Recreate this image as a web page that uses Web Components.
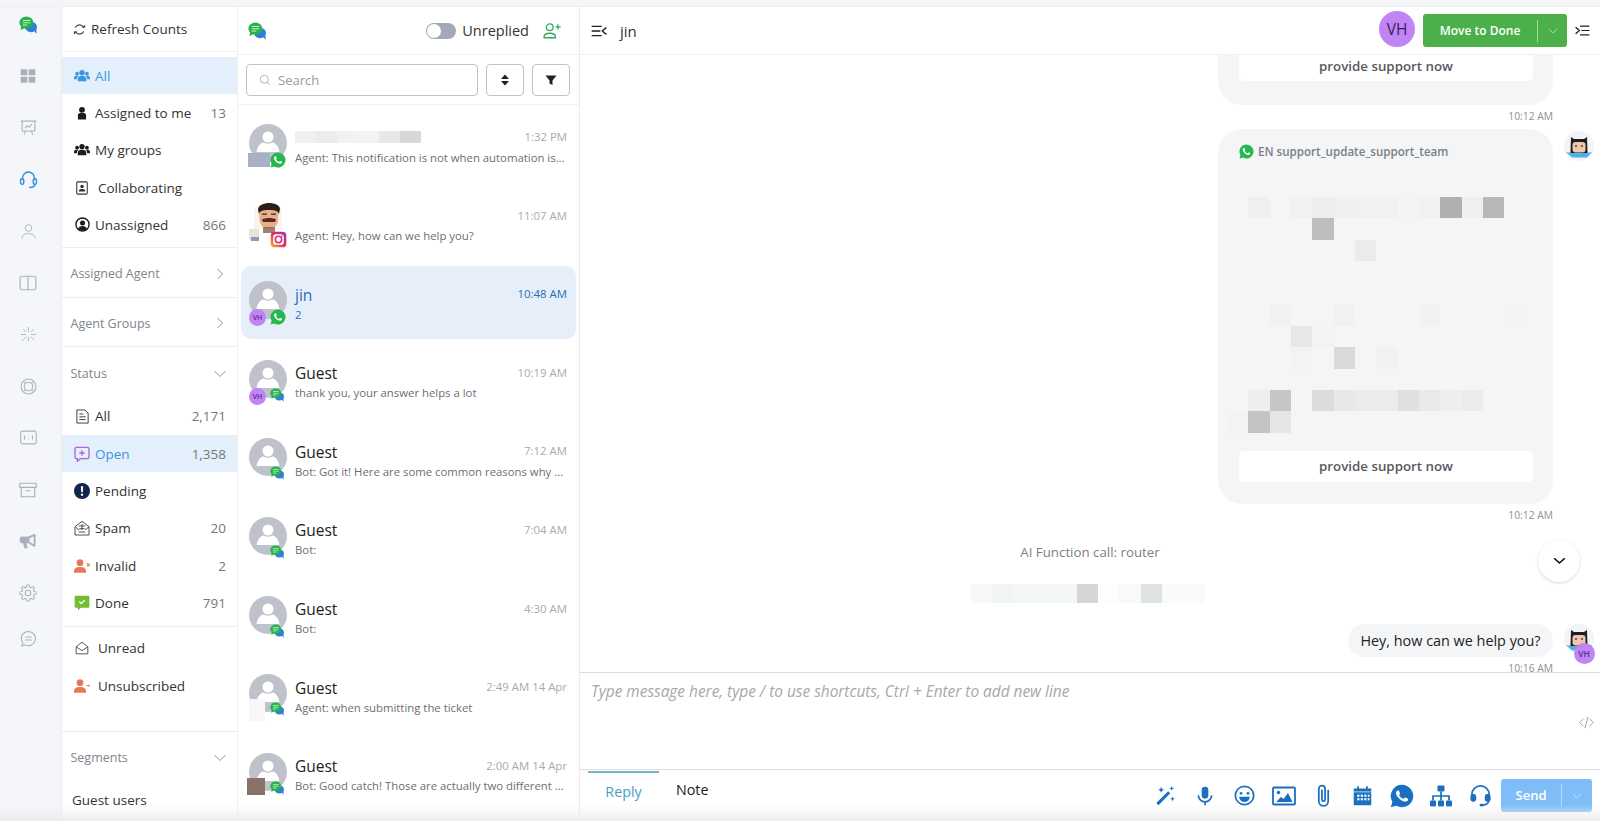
<!DOCTYPE html>
<html lang="en">
<head>
<meta charset="utf-8">
<title>Inbox</title>
<style>
  html, body { margin: 0; height: 100%; overflow: hidden; background: #fff; font-family: "Open Sans", "Liberation Sans", sans-serif; }
</style>
</head>
<body>
<inbox-app></inbox-app>
<script>
(() => {
  // Small helper: every element gets an open shadow root, its css and its markup
  const define = (name, css, html) => customElements.define(name, class extends HTMLElement {
    connectedCallback() {
      if (this.shadowRoot) return;
      const root = this.attachShadow({ mode: 'open' });
      root.innerHTML = '<style>' + css + '</style>' + html(this);
    }
  });

  const PHONE = 'M17.47 14.38c-.3-.15-1.76-.87-2.03-.97-.27-.1-.47-.15-.67.15-.2.3-.77.97-.94 1.16-.17.2-.35.22-.64.08-.3-.15-1.26-.46-2.39-1.48-.88-.79-1.48-1.76-1.65-2.06-.17-.3-.02-.46.13-.61.13-.13.3-.35.45-.52.15-.17.2-.3.3-.5.1-.2.05-.37-.03-.52-.07-.15-.67-1.61-.92-2.21-.24-.58-.49-.5-.67-.51h-.57c-.2 0-.52.07-.79.37-.27.3-1.04 1.02-1.04 2.48s1.07 2.88 1.21 3.07c.15.2 2.1 3.2 5.08 4.49.71.31 1.26.49 1.69.63.71.23 1.36.2 1.87.12.57-.09 1.76-.72 2-1.41.25-.7.25-1.29.17-1.41-.07-.13-.27-.2-.57-.35z';
  const GEAR = 'M19.4 15a1.65 1.65 0 0 0 .33 1.82l.06.06a2 2 0 0 1 0 2.83 2 2 0 0 1-2.83 0l-.06-.06a1.65 1.65 0 0 0-1.82-.33 1.65 1.65 0 0 0-1 1.51V21a2 2 0 0 1-2 2 2 2 0 0 1-2-2v-.09A1.65 1.65 0 0 0 9 19.4a1.65 1.65 0 0 0-1.82.33l-.06.06a2 2 0 0 1-2.83 0 2 2 0 0 1 0-2.83l.06-.06a1.65 1.65 0 0 0 .33-1.82 1.65 1.65 0 0 0-1.51-1H3a2 2 0 0 1-2-2 2 2 0 0 1 2-2h.09A1.65 1.65 0 0 0 4.6 9a1.65 1.65 0 0 0-.33-1.82l-.06-.06a2 2 0 0 1 0-2.83 2 2 0 0 1 2.83 0l.06.06a1.65 1.65 0 0 0 1.82.33H9a1.65 1.65 0 0 0 1-1.51V3a2 2 0 0 1 2-2 2 2 0 0 1 2 2v.09a1.65 1.65 0 0 0 1 1.51 1.65 1.65 0 0 0 1.82-.33l.06-.06a2 2 0 0 1 2.83 0 2 2 0 0 1 0 2.83l-.06.06a1.65 1.65 0 0 0-.33 1.82V9a1.65 1.65 0 0 0 1.51 1H21a2 2 0 0 1 2 2 2 2 0 0 1-2 2h-.09a1.65 1.65 0 0 0-1.51 1z';
  const three = c => `<g fill="${c}"><circle cx="12" cy="7" r="4"/><circle cx="4.6" cy="8.6" r="2.8"/><circle cx="19.4" cy="8.6" r="2.8"/><path d="M5.6 20v-3.5c0-3 2.4-4.7 6.4-4.7s6.4 1.700 6.400 4.700V20z"/><path d="M0 17v-2.500C0 12.600 2 11.800 4.600 11.800c.7 0 1.400.1 2 .3-1.500 1-2.300 2.500-2.300 4.400V17zM24 17v-2.500c0-1.900-2-2.700-4.600-2.700-.7 0-1.400.1-2 .3 1.500 1 2.300 2.500 2.300 4.400V17z"/></g>`;
  const personX = c => `<g fill="${c}"><circle cx="9" cy="7" r="5"/><path d="M0 22v-2.500C0 15.800 3.800 13.500 9 13.500s9 2.300 9 6V22z"/></g>`;

  const ICONS = {
    logo: `<ellipse cx="16" cy="14.500" rx="8" ry="7" fill="#2f80d8"/><path fill="#2f80d8" d="M19 19l4.500 4.500-.5-7z"/><ellipse cx="9.800" cy="8.800" rx="9.300" ry="8" fill="#27b34b"/><path fill="#27b34b" d="M3 13l-1 5.500 6-2.500z"/><path stroke="#c8f2d3" stroke-width="1.300" d="M5 6h10M5 9h10M5 12h6"/>`,
    grid: `<g fill="#a9b1bf"><rect x="1" y="2" width="10" height="9" rx="1"/><rect x="13" y="2" width="10" height="9" rx="1"/><rect x="1" y="13" width="10" height="9" rx="1"/><rect x="13" y="13" width="10" height="9" rx="1"/></g>`,
    board: `<g fill="none" stroke="#a9b1bf" stroke-width="1.500"><path d="M1 3h22M3 3v14h18V3M8 17l-2 5M16 17l2 5"/><path d="M7 13l3.500-3.500 2.500 2L17 7"/></g>`,
    headset: `<g fill="none" stroke="#2f93dc" stroke-width="1.800" stroke-linecap="round"><path d="M4.500 12V10a7.500 7.500 0 0 1 15 0v2"/><rect x="2" y="11" width="4" height="7" rx="2"/><rect x="18" y="11" width="4" height="7" rx="2"/><path d="M20 18c0 3-3 4-6.500 4"/></g>`,
    person: `<g fill="none" stroke="#a9b1bf" stroke-width="1.300"><circle cx="12" cy="7" r="4.700"/><path d="M3 22v-1.500c0-3.500 3.500-5.500 9-5.500s9 2 9 5.500V22"/></g>`,
    columns: `<g fill="none" stroke="#a9b1bf" stroke-width="1.600"><rect x="1.500" y="3" width="21" height="18" rx="2"/><path d="M12 3v18"/></g>`,
    spark: `<g stroke="#b4bac6" stroke-width="1.400" stroke-linecap="round"><path d="M12 2v6M12 16v5M2 12h6M16 12h6M5 5l3.500 3.500M15.500 15.500L19 19M19 5l-3.500 3.500M8.500 15.500L3 21"/></g>`,
    lifebuoy: `<g fill="none" stroke="#a9b1bf" stroke-width="1.500"><circle cx="12" cy="12" r="10.500"/><circle cx="12" cy="12" r="6"/><path d="M5 5l3 3M19 5l-3 3M5 19l3-3M19 19l-3-3"/></g>`,
    ratio: `<g fill="none" stroke="#a9b1bf" stroke-width="1.500"><rect x="1" y="3" width="22" height="18" rx="2.500"/><path d="M6.500 9v6M17.500 9v6M12 9.500v.6M12 13.900v.6"/></g>`,
    archive: `<g fill="none" stroke="#a9b1bf" stroke-width="1.600"><rect x="1" y="3" width="22" height="5.500" rx=".8"/><path d="M3 8.500V21h18V8.500M9 13h6"/></g>`,
    megaphone: `<path fill="#a9b1bf" d="M22 3v16l-2 .5-7.500-4.500H10l1.500 6.500H7L5.500 15H4a3 3 0 0 1-3-3V9a3 3 0 0 1 3-3h8.500L20 2.500z"/><path fill="#f4f6f9" d="M19.500 5.500v11l-5.500-3.500V8.500z"/>`,
    gear: `<g fill="none" stroke="#a9b1bf" stroke-width="1.400"><circle cx="12" cy="12" r="3.600"/><path d="${GEAR}"/></g>`,
    chatlines: `<g fill="none" stroke="#a9b1bf" stroke-width="1.500" stroke-linecap="round"><path d="M12 2a10 10 0 1 1-4.500 19L2.500 22.500 4 18A10 10 0 0 1 12 2z"/><path d="M8 10h8M8 14h8"/></g>`,
    refresh: `<g fill="none" stroke="#444" stroke-width="2" stroke-linecap="round"><path d="M19.500 8A8.500 8.500 0 0 0 4.500 8"/><path d="M4.500 16a8.500 8.500 0 0 0 15 0"/></g><path fill="#444" d="M16 8.500h6.500V3zM8 15.500H1.500V21z"/>`,
    usersBlue: three('#3d95e0'),
    usersBlack: three('#1c1c1c'),
    userSolid: `<g fill="#1c1c1c"><circle cx="12" cy="6.500" r="5"/><path d="M5 23v-7c0-2.500 2-4 4-4h6c2 0 4 1.500 4 4v7z"/></g>`,
    card: `<g fill="none" stroke="#333" stroke-width="1.800"><rect x="3" y="1.500" width="18" height="21" rx="2"/></g><g fill="#333"><circle cx="12" cy="9.500" r="3"/><path d="M6.500 18v-1.500c0-1.700 2.500-2.700 5.500-2.700s5.500 1 5.500 2.700V18z"/></g>`,
    userCircle: `<circle cx="12" cy="12" r="10.500" fill="none" stroke="#1c1c1c" stroke-width="2.200"/><g fill="#1c1c1c"><circle cx="12" cy="9.500" r="4"/><path d="M5 19c1-3 3.500-4.500 7-4.500s6 1.500 7 4.500l-3.500 3h-7z"/></g>`,
    doc: `<g fill="none" stroke="#444" stroke-width="1.600"><path d="M3 1.500h13l5 5V22.500H3z"/><path d="M7 8h6M7 12.500h10M7 17h10"/></g>`,
    msgPlus: `<g fill="none" stroke="#b163dc" stroke-width="2"><path d="M4 2h16a2.500 2.500 0 0 1 2.500 2.500v12A2.500 2.500 0 0 1 20 19H9.500L5 23v-4H4a2.500 2.500 0 0 1-2.500-2.500v-12A2.500 2.500 0 0 1 4 2z"/><path d="M12 6.500v8M8 10.500h8"/></g>`,
    alert: `<circle cx="12" cy="12" r="12" fill="#12264a"/><path fill="#fff" d="M10.300 5h3.400l-.5 9h-2.400z"/><circle cx="12" cy="17.500" r="1.800" fill="#fff"/>`,
    spam: `<g fill="none" stroke="#444" stroke-width="1.400"><path d="M1.500 10L12 2l10.500 8v12.500h-21z"/><path d="M1.500 10l6 5M22.500 10l-6 5M7 9h10M12 6v9M8 13l8 0M7 18h10"/></g>`,
    userX: personX('#e4765a') + `<path stroke="#e4765a" stroke-width="1.600" d="M19.500 8l4 4M23.500 8l-4 4"/>`,
    userMinus: personX('#e4765a') + `<path stroke="#e4765a" stroke-width="1.800" d="M19 11.500h5"/>`,
    done: `<path fill="#74bd2e" d="M2.500 1h19A1.500 1.500 0 0 1 23 2.500v15a1.500 1.500 0 0 1-1.500 1.500H10l-4 4v-4H2.500A1.500 1.500 0 0 1 1 17.500v-15A1.500 1.500 0 0 1 2.500 1z"/><path fill="none" stroke="#fff" stroke-width="2" d="M8 10l3 3 5-5"/>`,
    envOpen: `<g fill="none" stroke="#444" stroke-width="1.500"><path d="M2 10l10-8 10 8v12H2z"/><path d="M2 10l10 6.500L22 10"/></g>`,
    chevRight: `<path fill="none" stroke="#777" stroke-width="1.600" d="M7 2l10 10L7 22"/>`,
    chevDown: `<path fill="none" stroke="#777" stroke-width="1.600" d="M1 6l11 11L23 6"/>`,
    chevWhite: `<path fill="none" stroke="#fff" stroke-width="1.500" d="M2 7l10 10L22 7" opacity=".85"/>`,
    chevBold: `<path fill="none" stroke="#111" stroke-width="3.400" stroke-linecap="round" d="M3 5l9 13 9-13"/>`,
    addUser: `<g fill="none" stroke="#38a85a" stroke-width="1.800"><circle cx="9" cy="7" r="4.500"/><path d="M1.500 21v-1.500c0-3 3-4.500 7.500-4.500s7.500 1.500 7.500 4.500V21z"/></g><path stroke="#38a85a" stroke-width="1.800" d="M20 3v7M16.500 6.500h7"/>`,
    search: `<g fill="none" stroke="#999" stroke-width="1.500"><circle cx="10.500" cy="10.500" r="8"/><path d="M16.500 16.500L22 22"/></g>`,
    sort: `<path fill="#222" d="M12 1l8 9H4zM12 23l-8-9h16z"/>`,
    filter: `<path fill="#222" d="M1 3h22l-8 10v9l-6-3v-6z"/>`,
    menuLeft: `<g fill="none" stroke="#222" stroke-width="2.200"><path d="M1 4h15M1 12h13M1 20h15M23 6l-6 6 6 6"/></g>`,
    menuRight: `<g fill="none" stroke="#222" stroke-width="2.200"><path d="M8 4h15M10 12h13M8 20h15M1 6l6 6-6 6"/></g>`,
    code: `<g fill="none" stroke="#999" stroke-width="1.400"><path d="M7 6l-6 6 6 6M17 6l6 6-6 6M14.500 3l-5 18"/></g>`,
    whatsapp: `<path fill="#25b84c" d="M12 .8A11.200 11.200 0 0 0 2.400 17.800L.8 23.200l5.600-1.500A11.200 11.200 0 1 0 12 .8z"/><path fill="#fff" d="${PHONE}"/>`,
    whatsappBlue: `<path fill="#1a6fc0" d="M12 .8A11.200 11.200 0 0 0 2.400 17.800L.8 23.200l5.600-1.500A11.200 11.200 0 1 0 12 .8z"/><path fill="#fff" d="${PHONE}"/>`,
    instagram: `<defs><linearGradient id="ig" x1="0" y1="1" x2="1" y2="0"><stop offset="0" stop-color="#fdb32b"/><stop offset=".5" stop-color="#e9285c"/><stop offset="1" stop-color="#8a3ac6"/></linearGradient></defs><rect x="1" y="1" width="22" height="22" rx="5.500" fill="url(#ig)"/><rect x="4.500" y="4.500" width="15" height="15" rx="4" fill="#fff"/><circle cx="12" cy="12" r="4.500" fill="none" stroke="#d9316f" stroke-width="2.200"/><circle cx="16.800" cy="7.200" r="1.100" fill="#d9316f"/>`,
    wand: `<g fill="#1a6fc0"><path d="M1.500 20.500L15 7l2.500 2.500L4 23z"/><path d="M7 2l1 2.500L10.500 5.500 8 6.500 7 9 6 6.500 3.500 5.500 6 4.500zM19 1l.8 2 2 .8-2 .8-.8 2-.8-2-2-.8 2-.8zM20 13l.8 2 2 .8-2 .8-.8 2-.8-2-2-.8 2-.8z"/></g>`,
    mic: `<rect x="8" y="1" width="8" height="14" rx="4" fill="#1a6fc0"/><path fill="none" stroke="#1a6fc0" stroke-width="2" d="M4 11a8 8 0 0 0 16 0M12 19v4"/>`,
    smile: `<circle cx="12" cy="12" r="10.500" fill="none" stroke="#1a6fc0" stroke-width="2"/><circle cx="8" cy="9.500" r="1.600" fill="#1a6fc0"/><circle cx="16" cy="9.500" r="1.600" fill="#1a6fc0"/><path fill="#1a6fc0" d="M6 13.500h12a6 6 0 0 1-12 0z"/>`,
    image: `<rect x="1" y="3.500" width="22" height="17" rx="1" fill="none" stroke="#1a6fc0" stroke-width="1.800"/><circle cx="6.500" cy="8.500" r="1.700" fill="#1a6fc0"/><path fill="#1a6fc0" d="M4 18l5-5 2.500 2L16 9l4.500 9z"/>`,
    clip: `<path fill="none" stroke="#1a6fc0" stroke-width="1.700" stroke-linecap="round" d="M16.500 7v10.500a4.500 4.500 0 0 1-9 0V5.500a3 3 0 0 1 6 0V16a1.500 1.500 0 0 1-3 0V7"/>`,
    calendar: `<path fill="#1a6fc0" d="M2 4h4V1.500h2V4h8V1.500h2V4h4v19H2z"/><path fill="#fff" d="M2 7.500h20v.8H2z"/><g fill="#fff"><rect x="6" y="11" width="2.500" height="2.500"/><rect x="10" y="11" width="2.500" height="2.500"/><rect x="14" y="11" width="2.500" height="2.500"/><rect x="18" y="11" width="2" height="2.500"/><rect x="6" y="15" width="2.500" height="2.500"/><rect x="10" y="15" width="2.500" height="2.500"/><rect x="14" y="15" width="2.500" height="2.500"/><rect x="18" y="15" width="2" height="2.500"/></g>`,
    sitemap: `<g fill="#1a6fc0"><rect x="8.500" y="1.500" width="7" height="6" rx="1"/><rect x="1" y="16.500" width="6" height="6" rx="1"/><rect x="9" y="16.500" width="6" height="6" rx="1"/><rect x="17" y="16.500" width="6" height="6" rx="1"/></g><path fill="none" stroke="#1a6fc0" stroke-width="1.700" d="M12 7.500v9M4 16.500V12h16v4.500"/>`,
    agent: `<g fill="none" stroke="#1a6fc0" stroke-width="1.800"><path d="M3 13v-2a9 9 0 0 1 18 0v2"/><path d="M21 16c0 4-3 6-6.500 6"/></g><g fill="#1a6fc0"><rect x="1.500" y="10.500" width="6" height="8" rx="2.500"/><rect x="16.500" y="10.500" width="6" height="8" rx="2.500"/><rect x="11" y="20.500" width="4.500" height="3" rx="1.500"/></g>`
  };

  // viewBox is always 24x24, width/height can be stretched with w and h
  define('ui-icon', ':host{display:inline-flex;flex:none}svg{display:block}', el => {
    const s = el.getAttribute('size') || 16;
    const w = el.getAttribute('w') || s, h = el.getAttribute('h') || s;
    return `<svg width="${w}" height="${h}" viewBox="0 0 24 24" preserveAspectRatio="none">${ICONS[el.getAttribute('name')] || ''}</svg>`;
  });

  // Redacted areas: cells="col,row,color;..."
  define('pixel-block', ':host{display:grid;flex:none}i{display:block}', el => {
    const cw = el.getAttribute('cw') || 21.33, ch = el.getAttribute('ch') || 21.45;
    const cells = el.getAttribute('cells').split(';').map(c => c.trim().split(','));
    const cols = Math.max(...cells.map(c => +c[0])) + 1, rows = Math.max(...cells.map(c => +c[1])) + 1;
    const pad = el.getAttribute('rows') || rows;
    return `<style>:host{grid-template-columns:repeat(${cols},${cw}px);grid-template-rows:repeat(${pad},${ch}px)}</style>` +
      cells.map(c => `<i style="grid-column:${+c[0] + 1};grid-row:${+c[1] + 1};background:${c[2]}"></i>`).join('');
  });

  define('rail-item', ':host{display:flex;align-items:center;justify-content:center;height:51.700px}', () => '<slot></slot>');

  define('icon-rail', `
    :host{display:flex;flex-direction:column;flex:none;width:61px;box-sizing:content-box;background:#f4f6f9;border-right:1px solid #e9ebef;padding-right:0}
    .inner{width:56px;display:flex;flex-direction:column}
    .logo{display:flex;justify-content:center;align-items:center;height:36px;margin-bottom:7.200px}
    .last{margin-top:-6px}`, () => `<div class="inner">
    <div class="logo"><ui-icon name="logo" size="18"></ui-icon></div>
    <rail-item><ui-icon name="grid" size="16"></ui-icon></rail-item>
    <rail-item><ui-icon name="board" size="17"></ui-icon></rail-item>
    <rail-item><ui-icon name="headset" size="19"></ui-icon></rail-item>
    <rail-item><ui-icon name="person" size="17"></ui-icon></rail-item>
    <rail-item><ui-icon name="columns" size="18"></ui-icon></rail-item>
    <rail-item><ui-icon name="spark" size="17"></ui-icon></rail-item>
    <rail-item><ui-icon name="lifebuoy" size="17"></ui-icon></rail-item>
    <rail-item><ui-icon name="ratio" size="17"></ui-icon></rail-item>
    <rail-item><ui-icon name="archive" size="18"></ui-icon></rail-item>
    <rail-item><ui-icon name="megaphone" size="18"></ui-icon></rail-item>
    <rail-item><ui-icon name="gear" size="18"></ui-icon></rail-item>
    <rail-item class="last"><ui-icon name="chatlines" size="17"></ui-icon></rail-item></div>`);

  define('nav-item', `
    :host{display:flex;align-items:center;height:37.300px;padding:0 11px 0 12px;font-size:13.500px;color:#333;white-space:nowrap}
    :host([active]){background:#e3effb;color:#3d95e0}
    .ico{width:16px;display:flex;justify-content:center;flex:none}
    .lbl{flex:1;margin-left:5px}
    :host([wide]) .lbl{margin-left:8px}
    .cnt{color:#777;font-size:13.500px}`, el => `
    <span class="ico"><ui-icon name="${el.getAttribute('icon')}" size="${el.getAttribute('size') || 16}"></ui-icon></span>
    <span class="lbl">${el.getAttribute('label')}</span>
    <span class="cnt">${el.getAttribute('count') || ''}</span>`);

  define('nav-section', `
    :host{display:flex;align-items:center;justify-content:space-between;height:49.500px;padding:2px 11px 0 8.500px;font-size:12.500px;color:#80858c;border-bottom:1px solid #eceef0;box-sizing:border-box}
    :host([open]){border-bottom:0}`, el => `
    <span>${el.getAttribute('label')}</span>
    <ui-icon name="${el.hasAttribute('open') ? 'chevDown' : 'chevRight'}" size="12"></ui-icon>`);

  define('nav-panel', `
    :host{display:flex;flex-direction:column;flex:none;width:175px;border-right:1px solid #eef0f2;overflow:hidden}
    .refresh{display:flex;align-items:center;gap:5px;height:45px;padding-left:11px;flex:none;font-size:13.500px;color:#333;border-bottom:1px solid #eef0f2;box-sizing:border-box;margin-bottom:5px}
    .group{flex:none;border-bottom:1px solid #eceef0;padding-bottom:4px}
    .group.low{padding-top:3px;padding-bottom:27px}
    .guest{padding:0 0 0 10px;font-size:13.500px;color:#333;line-height:38px;flex:none;margin-top:-1px}
    nav-section{flex:none}`, () => `
    <div class="refresh"><ui-icon name="refresh" size="13"></ui-icon>Refresh Counts</div>
    <div class="group">
      <nav-item icon="usersBlue" label="All" active></nav-item>
      <nav-item icon="userSolid" label="Assigned to me" count="13" size="14"></nav-item>
      <nav-item icon="usersBlack" label="My groups"></nav-item>
      <nav-item icon="card" label="Collaborating" wide size="14"></nav-item>
      <nav-item icon="userCircle" label="Unassigned" count="866" size="15"></nav-item>
    </div>
    <nav-section label="Assigned Agent"></nav-section>
    <nav-section label="Agent Groups"></nav-section>
    <nav-section label="Status" open style="height:50.300px"></nav-section>
    <div class="group">
      <nav-item icon="doc" label="All" count="2,171" size="15"></nav-item>
      <nav-item icon="msgPlus" label="Open" count="1,358" active></nav-item>
      <nav-item icon="alert" label="Pending"></nav-item>
      <nav-item icon="spam" label="Spam" count="20"></nav-item>
      <nav-item icon="userX" label="Invalid" count="2"></nav-item>
      <nav-item icon="done" label="Done" count="791"></nav-item>
    </div>
    <div class="group low">
      <nav-item icon="envOpen" label="Unread" wide size="14"></nav-item>
      <nav-item icon="userMinus" label="Unsubscribed" wide></nav-item>
    </div>
    <nav-section label="Segments" open></nav-section>
    <div class="guest">Guest users</div>`);

  define('user-avatar', `
    :host{display:block;position:relative;width:38px;height:38px;flex:none}
    svg{display:block}`, el => {
    return el.hasAttribute('photo')
      ? `<svg width="38" height="38" viewBox="0 0 38 38"><rect width="38" height="38" fill="#fff"/><path fill="#f6ead9" d="M5 4h28v22H5z" opacity=".5"/><path fill="#e6b08c" d="M10 4h20l-1 13c0 6-5 9-9 9s-9-3-9.500-9z"/><path fill="#7c5a44" d="M14 24h12v6H14z" opacity=".75"/><path fill="#2e1e18" d="M9 7c0-5 6-7 11-7s11 2 11 6l-1 5c-1-3-3-4-10-4s-9 1-10 4z"/><path fill="#5a2a20" d="M13 16.500c3-2 11-2 14 0l-1 2.500H14z"/><path fill="#3a2a22" d="M13 10.500h5v1.300h-5zM22 10.500h5v1.300h-5z"/><path fill="#e8e2da" d="M0 26h10v11H0z"/><path fill="#8a9cb5" d="M2 34h8v4H2z"/></svg>`
      : `<svg width="38" height="38" viewBox="0 0 38 38"><circle cx="19" cy="19" r="19" fill="#bfc2ca"/><circle cx="19" cy="13" r="5.500" fill="#fff"/><path fill="#fff" d="M7.500 28c1-6 4-9 7-9.500 1.500 1.500 7.500 1.500 9 0 3 .5 6 3.500 7 9.500z"/></svg>`;
  });

  define('mini-vh', `
    :host{display:flex;align-items:center;justify-content:center;border-radius:50%;background:#c084f5;color:#5b2a86;font-weight:600;width:17px;height:17px;font-size:7px}`, () => 'VH');

  define('conv-row', `
    :host{display:flex;height:73px;padding:0 9px 0 8px;margin-bottom:5.600px;border-radius:10px;flex:none}
    :host([selected]){background:#e6eefa}
    .av{position:relative;width:38px;height:38px;margin-top:15px;flex:none}
    .body{flex:1;min-width:0;margin-left:8px;padding-top:17.500px}
    .top{display:flex;justify-content:space-between;height:22px;line-height:22px;align-items:center}
    .name{font-size:15.500px;color:#222}
    :host([selected]) .name,:host([selected]) .time,:host([selected]) .msg{color:#1f6fb5}
    .time{font-size:11.400px;color:#aaa;white-space:nowrap;margin-top:-1px}
    .msg{font-size:11.350px;line-height:18px;color:#6b6f74;white-space:nowrap;overflow:hidden}
    ::slotted([slot=chan]){position:absolute;left:21px;top:28px}
    ::slotted([slot=cover]){position:absolute}`, el => `
    <div class="av"><user-avatar ${el.hasAttribute('photo') ? 'photo' : ''}></user-avatar><slot name="cover"></slot><slot name="chan"></slot></div>
    <div class="body">
      <div class="top"><span class="name"><slot name="name">${el.getAttribute('name') || ''}</slot></span><span class="time">${el.getAttribute('time')}</span></div>
      <div class="msg">${el.getAttribute('msg')}</div>
    </div>`);

  define('conv-list', `
    :host{display:flex;flex-direction:column;flex:none;width:341px;border-right:1px solid #e9ebee;overflow:hidden}
    .head{display:flex;align-items:center;height:48px;padding:0 18px 0 10px;flex:none;border-bottom:1px solid #eff1f3;box-sizing:border-box}
    .spring{flex:1}
    .toggle{width:30px;height:16px;border-radius:8px;background:#a3a9b8;position:relative;margin-right:6px}
    .toggle i{position:absolute;left:1px;top:1px;width:14px;height:14px;border-radius:50%;background:#fff}
    .unrep{font-size:14.500px;color:#333;margin-right:14px}
    .tools{display:flex;align-items:center;gap:8px;height:50px;padding:1px 9px 0 8px;flex:none;border-bottom:1px solid #eff1f3;box-sizing:border-box}
    .search{flex:1;height:32px;box-sizing:border-box;border:1px solid #c0c2c5;border-radius:4px;display:flex;align-items:center;gap:7px;padding-left:12px;font-size:13px;color:#9a9a9a}
    .btn{width:38px;height:32px;box-sizing:border-box;border:1px solid #c0c2c5;border-radius:4px;display:flex;align-items:center;justify-content:center}
    .rows{display:flex;flex-direction:column;padding:4px 3px 0;flex:1;min-height:0}`, () => `
    <div class="head">
      <ui-icon name="logo" size="18"></ui-icon><span class="spring"></span>
      <span class="toggle"><i></i></span><span class="unrep">Unreplied</span>
      <ui-icon name="addUser" size="18"></ui-icon>
    </div>
    <div class="tools">
      <div class="search"><ui-icon name="search" size="12"></ui-icon>Search</div>
      <div class="btn"><ui-icon name="sort" size="12"></ui-icon></div>
      <div class="btn"><ui-icon name="filter" size="12"></ui-icon></div>
    </div>
    <div class="rows">
      <conv-row time="1:32 PM" msg="Agent: This notification is not when automation is...">
        <pixel-block slot="name" cw="21" ch="12" style="margin-top:-1px" cells="0,0,#f0f0f0;1,0,#ececec;2,0,#f2f2f2;3,0,#f3f3f3;4,0,#e8e8e8;5,0,#d8d8d8"></pixel-block>
        <div slot="cover" style="left:-1px;top:29px;width:22px;height:14px;background:#a9b0c4"></div>
        <ui-icon slot="chan" name="whatsapp" size="16"></ui-icon>
      </conv-row>
      <conv-row photo time="11:07 AM" msg="Agent: Hey, how can we help you?">
        <ui-icon slot="chan" name="instagram" size="17"></ui-icon>
      </conv-row>
      <conv-row selected name="jin" time="10:48 AM" msg="2">
        <mini-vh slot="cover" style="left:0;top:28px"></mini-vh>
        <ui-icon slot="chan" name="whatsapp" size="16"></ui-icon>
      </conv-row>
      <conv-row name="Guest" time="10:19 AM" msg="thank you, your answer helps a lot">
        <mini-vh slot="cover" style="left:0;top:28px"></mini-vh>
        <ui-icon slot="chan" name="logo" size="14"></ui-icon>
      </conv-row>
      <conv-row name="Guest" time="7:12 AM" msg="Bot: Got it! Here are some common reasons why ...">
        <ui-icon slot="chan" name="logo" size="14"></ui-icon>
      </conv-row>
      <conv-row name="Guest" time="7:04 AM" msg="Bot:">
        <ui-icon slot="chan" name="logo" size="14"></ui-icon>
      </conv-row>
      <conv-row name="Guest" time="4:30 AM" msg="Bot:">
        <ui-icon slot="chan" name="logo" size="14"></ui-icon>
      </conv-row>
      <conv-row name="Guest" time="2:49 AM 14 Apr" msg="Agent: when submitting the ticket">
        <div slot="cover" style="left:0;top:25px;width:16px;height:22px;background:#f8f8f8"></div>
        <ui-icon slot="chan" name="logo" size="14"></ui-icon>
      </conv-row>
      <conv-row name="Guest" time="2:00 AM 14 Apr" msg="Bot: Good catch! Those are actually two different ...">
        <div slot="cover" style="left:-2px;top:25px;width:18px;height:17px;background:#8a7268"></div>
        <ui-icon slot="chan" name="logo" size="14"></ui-icon>
      </conv-row>
    </div>`);

  define('bot-avatar', `
    :host{display:block;position:relative;width:30px;height:30px;flex:none}
    svg{display:block}`, () => `
    <svg width="30" height="30" viewBox="0 0 30 30"><circle cx="15" cy="15" r="15" fill="#f3f4f6"/>
      <path fill="#4fb0e8" d="M2 21l6 1h14l6-1-5 5.500H8z"/>
      <path fill="#1d1d22" d="M7 6l3 2h10l3-2 .5 16h-17z"/>
      <rect x="8.500" y="11" width="13" height="10.500" rx="3" fill="#f1c6ab"/>
      <circle cx="12" cy="15" r=".9" fill="#333"/><circle cx="18" cy="15" r=".9" fill="#333"/>
    </svg><slot></slot>`);

  define('chat-time', `
    :host{display:block;text-align:right;padding-right:47px;font-size:10.300px;line-height:22px;height:22px;margin-bottom:2px;color:#8d9095;flex:none}`, () => '<slot></slot>');

  // Template message card: header, redacted body, quick reply button
  define('template-card', `
    :host{display:flex;justify-content:flex-end;padding-right:6px;flex:none;gap:11px}
    .bubble{width:335px;box-sizing:border-box;background:#f4f5f7;border-radius:24px;padding:0 20px 22px 21px}
    .title{display:flex;align-items:center;gap:4px;height:20px;margin:12px 0 36px;font-size:11.600px;font-weight:600;color:#7b8087}
    .body{margin:0 0 18px -12px}
    .cta{height:31px;background:#fff;border-radius:5px;display:flex;align-items:center;justify-content:center;font-size:13.300px;font-weight:600;color:#55595e}
    .side{width:30px;flex:none;padding-top:2px}
    :host([bare]) .bubble{border-radius:0 0 24px 24px;padding-bottom:24px}`, el => `
    <div class="bubble">
      ${el.hasAttribute('bare') ? '' : `<div class="title"><ui-icon name="whatsapp" size="15"></ui-icon>EN support_update_support_team</div><div class="body"><slot></slot></div>`}
      <div class="cta">provide support now</div>
    </div>
    <div class="side">${el.hasAttribute('bare') ? '' : '<bot-avatar></bot-avatar>'}</div>`);

  define('chat-text', `
    :host{display:flex;justify-content:flex-end;padding-right:6px;gap:11px;flex:none}
    .b{background:#f4f5f7;border-radius:17px;height:33px;width:205px;box-sizing:border-box;display:flex;align-items:center;justify-content:center;font-size:14.400px;color:#222}
    .side{position:relative;width:30px;height:30px}
    mini-vh{position:absolute;left:9.500px;top:19px;width:21px;height:21px;font-size:8.500px}`, () => `
    <div class="b"><slot></slot></div>
    <div class="side"><bot-avatar></bot-avatar><mini-vh></mini-vh></div>`);

  define('reply-box', `
    :host{display:flex;flex-direction:column;flex:none;height:149px;background:#fff;border-top:1px solid #dcdee0;box-sizing:border-box}
    .input{flex:none;height:97px;box-sizing:border-box;position:relative;padding:10px 11px;font-size:15.400px;font-style:italic;color:#a6a8ab;line-height:18px;border-bottom:1px solid #dcdee0}
    .code{position:absolute;right:6px;top:42px}
    .bar{display:flex;align-items:center;flex:1;padding-right:8px}
    .tab{height:100%;box-sizing:border-box;font-size:14.300px;padding-top:10px}
    .reply{margin-left:8px;width:71px;text-align:center;color:#4a9bc8;border-top:2px solid #7ab3d1;margin-top:1px;padding-top:9px;box-sizing:border-box}
    .note{margin-left:17px;color:#1c1c1c}
    .icons{display:flex;align-items:center;margin-left:auto}
    .icons span{display:flex;justify-content:center;width:39.300px}
    .send{margin-left:0;width:91px;height:33px;background:#7fbdf9;border-radius:3px;display:flex;align-items:center;color:#fff;font-size:13px;font-weight:600;box-sizing:border-box}
    .send b{flex:1;text-align:center;font-weight:600;border-right:1px solid #b6d9fb;line-height:23px;width:60px}
    .send i{width:30px;display:flex;justify-content:center}`, () => `
    <div class="input">Type message here, type / to use shortcuts, Ctrl + Enter to add new line<ui-icon class="code" name="code" size="15"></ui-icon></div>
    <div class="bar">
      <div class="tab reply">Reply</div>
      <div class="tab note">Note</div>
      <div class="icons">
        <span><ui-icon name="wand" size="21"></ui-icon></span>
        <span><ui-icon name="mic" size="20"></ui-icon></span>
        <span><ui-icon name="smile" size="21"></ui-icon></span>
        <span><ui-icon name="image" size="24"></ui-icon></span>
        <span><ui-icon name="clip" size="25"></ui-icon></span>
        <span><ui-icon name="calendar" size="21"></ui-icon></span>
        <span><ui-icon name="whatsappBlue" size="24"></ui-icon></span>
        <span><ui-icon name="sitemap" size="24"></ui-icon></span>
        <span style="margin-right:1px"><ui-icon name="agent" size="23"></ui-icon></span>
      </div>
      <div class="send"><b>Send</b><i><ui-icon name="chevWhite" size="10"></ui-icon></i></div>
    </div>`);

  define('chat-pane', `
    :host{display:flex;flex-direction:column;flex:1;min-width:0;position:relative;overflow:hidden}
    .head{display:flex;align-items:center;height:48px;flex:none;padding:0 10px 0 11px;border-bottom:1px solid #eff1f3;box-sizing:border-box;position:relative;z-index:1;background:#fff}
    .who{font-size:15px;color:#333;margin-left:13px;flex:1}
    .vh{width:36px;height:36px;border-radius:50%;background:#c084f5;color:#3b1d58;font-size:15.500px;display:flex;align-items:center;justify-content:center;margin-top:-4px;margin-right:8px}
    .done{display:flex;align-items:center;width:144px;height:33px;background:#4cb04a;border-radius:3px;color:#fff;font-size:12px;font-weight:600;margin-right:8px}
    .done b{font-weight:600;flex:none;width:114px;text-align:center;border-right:1px solid #a5d7a4;line-height:22px}
    .done i{flex:1;display:flex;justify-content:center}
    .log{flex:1;min-height:0;display:flex;flex-direction:column;overflow:hidden}
    .sys{text-align:center;font-size:13.300px;color:#7d8186;line-height:20px;margin:14px 0 22px;flex:none}
    .blur{display:flex;justify-content:center;margin:0 0 21px -5px;flex:none}
    .down{position:absolute;left:958px;top:533px;width:42px;height:42px;border-radius:50%;background:#fff;box-shadow:0 1px 3px rgba(0,0,0,.16);display:flex;align-items:center;justify-content:center}`, () => `
    <div class="head">
      <ui-icon name="menuLeft" w="16" h="14"></ui-icon>
      <span class="who">jin</span>
      <span class="vh">VH</span>
      <div class="done"><b>Move to Done</b><i><ui-icon name="chevWhite" size="10"></ui-icon></i></div>
      <ui-icon name="menuRight" w="15" h="13"></ui-icon>
    </div>
    <div class="log">
      <template-card bare style="margin-top:-5px"></template-card>
      <chat-time>10:12 AM</chat-time>
      <template-card>
        <pixel-block rows="11" cells="1,0,#eeeff1;3,0,#f0f1f1;4,0,#eeeef0;5,0,#eff0f2;6,0,#f0f1f3;7,0,#f0f1f3;8,0,#f3f4f6;9,0,#f0f1f3;10,0,#b0b0b2;11,0,#eeeff1;12,0,#b8b8ba;4,1,#bebebe;6,2,#ebebed;2,5,#f1f2f3;5,5,#f0f1f2;9,5,#f1f2f3;13,5,#f3f4f5;3,6,#e6e7e9;4,6,#f3f3f5;3,7,#f2f3f5;5,7,#dadadc;7,7,#f0f1f3;1,9,#edeef0;2,9,#c6c6c8;4,9,#dcdcde;5,9,#e8e8ea;6,9,#ebebed;7,9,#ebebed;8,9,#e0e0e2;9,9,#e9e9eb;10,9,#eeeef0;11,9,#ebebed;0,10,#f2f3f5;1,10,#c4c4c6;2,10,#e6e6e8"></pixel-block>
      </template-card>
      <chat-time>10:12 AM</chat-time>
      <div class="sys">AI Function call: router</div>
      <div class="blur"><pixel-block ch="19" cw="21.300" cells="0,0,#f7f9f9;1,0,#f1f4f4;2,0,#f4f7f7;3,0,#f4f7f7;4,0,#f4f7f7;5,0,#d3d5d6;6,0,#fdfdfd;7,0,#f8f9fa;8,0,#dfe2e3;9,0,#f9fafb;10,0,#f9fafb"></pixel-block></div>
      <chat-text>Hey, how can we help you?</chat-text>
      <chat-time>10:16 AM</chat-time>
    </div>
    <reply-box></reply-box>
    <div class="down"><ui-icon name="chevBold" w="13" h="8"></ui-icon></div>`);

  define('inbox-app', `
    :host{display:flex;flex-direction:column;height:821px;overflow:hidden;position:relative;font-family:"Open Sans","Liberation Sans",sans-serif}
    .strip{height:7px;flex:none;background:#f4f5f7;border-bottom:1px solid #edeef0;box-sizing:border-box}
    .cols{display:flex;flex:1;min-height:0}
    .fade{position:absolute;left:0;right:0;bottom:0;height:16px;background:linear-gradient(rgba(240,240,240,0),rgba(236,236,236,.95));pointer-events:none}`, () => `
    <div class="strip"></div>
    <div class="cols"><icon-rail></icon-rail><nav-panel></nav-panel><conv-list></conv-list><chat-pane></chat-pane></div>
    <div class="fade"></div>`);
})();
</script>
</body>
</html>
